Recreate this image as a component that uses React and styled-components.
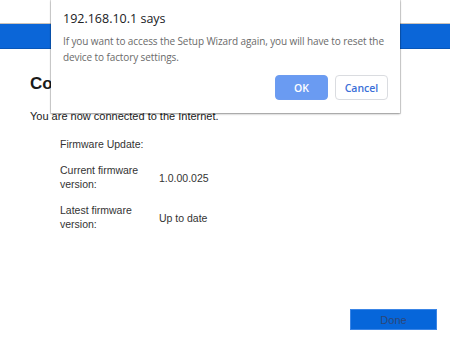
import styled, { createGlobalStyle } from 'styled-components';

const GlobalStyle = createGlobalStyle`
    html, body {
        margin: 0;
        padding: 0;
        background: #ffffff;
    }
    #root {
        width: 450px;
        height: 340px;
        overflow: hidden;
        position: relative;
    }
`;

const Page = styled.div`
    width: 450px;
    height: 340px;
    display: flex;
    flex-direction: column;
    font-family: 'Liberation Sans', Arial, sans-serif;
    color: #222;
`;

const TopStrip = styled.div`
    height: 23px;
    border-bottom: 1px solid #cbc3ba;
    flex-shrink: 0;
`;

const BlueBar = styled.div`
    height: 24px;
    background: #0b66d8;
    border-bottom: 1px solid #0856b8;
    flex-shrink: 0;
`;

const Content = styled.div`
    flex: 1;
    display: flex;
    flex-direction: column;
    padding: 25px 13px 10px 30px;
`;

const Heading = styled.h1`
    margin: 0;
    font-size: 17px;
    font-weight: bold;
    color: #1a1a1a;
`;

const Intro = styled.p`
    margin: 16px 0 0;
    font-size: 11px;
    color: #1a1a1a;
`;

const InfoTable = styled.div`
    margin: 15px 0 0 30px;
    display: grid;
    grid-template-columns: 99px auto;
    row-gap: 12px;
    align-items: center;
    font-size: 10.5px;
    line-height: 14px;
    color: #333;
`;

const Label = styled.div`
    width: ${(p) => (p.$wide ? 'auto' : '86px')};
    white-space: ${(p) => (p.$wide ? 'nowrap' : 'normal')};
`;

const Value = styled.div`
    padding-top: 2px;
`;

const Footer = styled.div`
    margin-top: auto;
    display: flex;
    justify-content: flex-end;
`;

const DoneButton = styled.button`
    width: 87px;
    height: 21px;
    border: 1px solid #3a85e6;
    background: #0666da;
    color: #2c4778;
    font-family: 'Liberation Sans', Arial, sans-serif;
    font-size: 11px;
    padding: 0;
`;

const Dialog = styled.div`
    position: absolute;
    left: 51px;
    top: 0;
    width: 349px;
    height: 113px;
    background: #fff;
    box-shadow: 0 1px 2px rgba(0, 0, 0, 0.35), 0 0 0 1px rgba(0, 0, 0, 0.12);
    font-family: 'Open Sans', 'Noto Sans', sans-serif;
    display: flex;
    flex-direction: column;
    padding: 10px 12px 0 12px;
    box-sizing: border-box;
`;

const DialogTitle = styled.div`
    font-size: 12.5px;
    color: #202124;
    line-height: 18px;
`;

const DialogMessage = styled.div`
    margin-top: 5px;
    font-size: 10px;
    letter-spacing: -0.1px;
    line-height: 16px;
    color: #6a6a6a;
    white-space: nowrap;
`;

const DialogActions = styled.div`
    margin-top: 10px;
    display: flex;
    justify-content: flex-end;
    gap: 7px;
`;

const DialogButton = styled.button`
    width: 53px;
    height: 25px;
    border-radius: 4px;
    font-family: 'Open Sans', 'Noto Sans', sans-serif;
    font-size: 10.5px;
    font-weight: 600;
    padding: 0;
    border: 1px solid ${(p) => (p.$primary ? '#6d9cf0' : '#dadce0')};
    background: ${(p) => (p.$primary ? '#6a9bf2' : '#fff')};
    color: ${(p) => (p.$primary ? '#fff' : '#3b6fd8')};
`;

export default function App() {
    return (
        <>
            <GlobalStyle />
            <Page>
                <TopStrip />
                <BlueBar />
                <Content>
                    <Heading>Congratulations!</Heading>
                    <Intro>You are now connected to the Internet.</Intro>
                    <InfoTable>
                        <Label $wide>Firmware Update:</Label>
                        <Value />
                        <Label>Current firmware version:</Label>
                        <Value>1.0.00.025</Value>
                        <Label>Latest firmware version:</Label>
                        <Value>Up to date</Value>
                    </InfoTable>
                    <Footer>
                        <DoneButton>Done</DoneButton>
                    </Footer>
                </Content>
            </Page>
            <Dialog>
                <DialogTitle>192.168.10.1 says</DialogTitle>
                <DialogMessage>
                    If you want to access the Setup Wizard again, you will have to reset the
                    <br />
                    device to factory settings.
                </DialogMessage>
                <DialogActions>
                    <DialogButton $primary>OK</DialogButton>
                    <DialogButton>Cancel</DialogButton>
                </DialogActions>
            </Dialog>
        </>
    );
}
